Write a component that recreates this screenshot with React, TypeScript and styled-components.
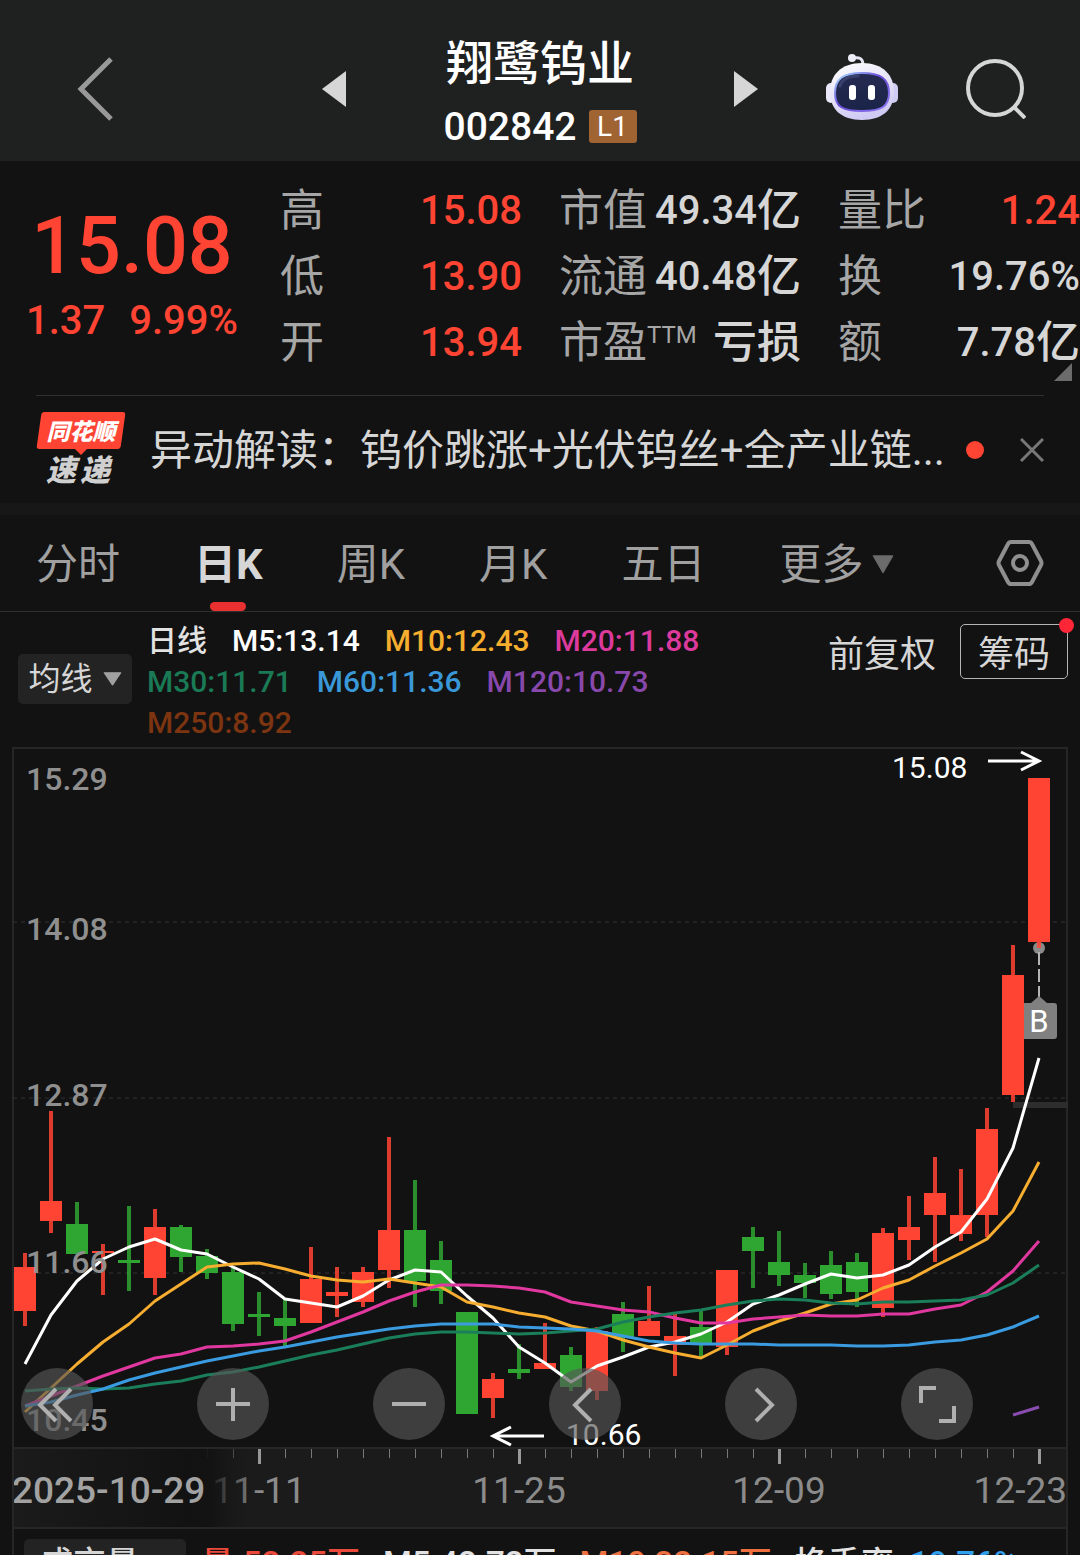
import React from "react";
import styled, { createGlobalStyle, css } from "styled-components";

const UP = "#ff4433";
const DOWN = "#2fa532";

const GlobalStyle = createGlobalStyle`
  * { box-sizing: border-box; }
  body {
    margin: 0;
    background: #121212;
    color: #d6d6d6;
    font-family: Roboto, "Noto Sans CJK SC", sans-serif;
  }
  button { font: inherit; color: inherit; background: none; border: 0; padding: 0; margin: 0; cursor: pointer; }
  svg { display: block; }
  svg text { font-family: Roboto, "Noto Sans CJK SC", sans-serif; }
`;

const Screen = styled.main`
  display: flex;
  flex-direction: column;
  height: 100vh;
  overflow: hidden;
`;

/* ---------- header ---------- */

const Header = styled.header`
  flex: none;
  display: grid;
  grid-template-columns: 1fr 436px 1fr;
  align-items: center;
  height: 161px;
  padding-top: 16px;
  background: #1f2120;
`;

const HeaderSide = styled.div<{ $end?: boolean }>`
  display: flex;
  align-items: center;
  gap: 68px;
  ${(p) =>
    p.$end
      ? css`
          justify-content: flex-end;
          padding-right: 54px;
        `
      : css`
          padding-left: 77px;
        `}
`;

const StockSwitcher = styled.div`
  display: flex;
  align-items: center;
  justify-content: space-between;
`;

const StockTitle = styled.div`
  display: flex;
  flex-direction: column;
  align-items: center;
  padding-top: 12px;
`;

const StockName = styled.h1`
  margin: 0;
  font-size: 47px;
  line-height: 64px;
  font-weight: 500;
  color: #fff;
`;

const StockCode = styled.div`
  display: flex;
  align-items: center;
  gap: 12px;
  font-size: 39px;
  line-height: 62px;
  font-weight: 500;
  color: #fff;
`;

const LevelBadge = styled.span`
  width: 48px;
  border-radius: 3px;
  background: #a06433;
  font-size: 28px;
  line-height: 33px;
  font-weight: 400;
  text-align: center;
`;

/* ---------- quote ---------- */

const Quote = styled.section`
  position: relative;
  flex: none;
  display: grid;
  grid-template-columns: 280px 1fr;
  padding: 17px 0 19px;
`;

const PriceBlock = styled.div`
  display: flex;
  flex-direction: column;
  align-items: center;
  width: 264px;
  padding-top: 21px;
  color: ${UP};
  font-weight: 500;
`;

const Price = styled.div`
  font-size: 79px;
  line-height: 94px;
`;

const Change = styled.div`
  display: flex;
  gap: 24px;
  font-size: 40px;
  line-height: 56px;
`;

const Stats = styled.dl`
  display: grid;
  grid-template-columns: repeat(3, 1fr);
  grid-auto-rows: 66px;
  column-gap: 37px;
  margin: 0;
`;

const Stat = styled.div`
  display: flex;
  align-items: center;
  justify-content: space-between;
  line-height: 66px;
  white-space: nowrap;
`;

const StatLabel = styled.dt`
  display: flex;
  font-size: 44px;
  color: #a6a6a6;
`;

const Superscript = styled.sup`
  font-size: 24px;
  line-height: 50px;
`;

const StatValue = styled.dd<{ $up?: boolean }>`
  display: flex;
  align-items: center;
  margin: 0;
  font-size: 40px;
  font-weight: 500;
  color: ${(p) => (p.$up ? UP : "#d6d6d6")};
`;

const Unit = styled.span`
  font-size: 44px;
`;

const ExpandCorner = styled.span`
  position: absolute;
  right: 8px;
  bottom: 14px;
  border-style: solid;
  border-width: 0 0 18px 18px;
  border-color: transparent transparent #6b6b6b transparent;
`;

/* ---------- news ---------- */

const News = styled.section`
  flex: none;
  display: flex;
  align-items: center;
  height: 108px;
  margin: 0 36px;
  border-top: 1px solid #303030;
`;

const NewsTag = styled.div`
  flex: none;
  display: flex;
  flex-direction: column;
  align-items: center;
  width: 90px;
  font-family: "Noto Sans CJK SC", sans-serif;
  font-weight: 900;
  font-style: italic;
`;

const NewsTagTop = styled.div`
  position: relative;
  width: 84px;
  height: 37px;
  color: #fff;
  font-size: 23px;
  line-height: 36px;
  text-align: center;
  z-index: 0;

  &::before {
    content: "";
    position: absolute;
    inset: 0;
    z-index: -1;
    border-radius: 3px;
    background: ${UP};
    transform: skewX(-8deg);
  }
  &::after {
    content: "";
    position: absolute;
    left: 50%;
    top: 37px;
    margin-left: -6px;
    border: 6px solid transparent;
    border-bottom: 0;
    border-top-color: ${UP};
  }
`;

const NewsTagBottom = styled.div`
  display: flex;
  gap: 4px;
  padding-right: 6px;
  color: #d0d0d0;
  font-size: 30px;
  line-height: 38px;
`;

const NewsText = styled.a`
  flex: 1;
  min-width: 0;
  margin-left: 24px;
  padding-top: 3px;
  overflow: hidden;
  color: #d6d6d6;
  font-size: 42px;
  line-height: 60px;
  white-space: nowrap;
  text-decoration: none;
`;

const UnreadDot = styled.span`
  flex: none;
  width: 18px;
  height: 18px;
  margin: 0 36px 0 14px;
  border-radius: 50%;
  background: ${UP};
`;

const Band = styled.div`
  flex: none;
  height: 12px;
  background: #171717;
`;

/* ---------- tabs ---------- */

const Tabs = styled.nav`
  flex: none;
  display: flex;
  align-items: stretch;
  gap: 74px;
  height: 97px;
  padding: 0 36px;
  border-bottom: 1px solid #303030;
`;

const Tab = styled.button<{ $active?: boolean }>`
  position: relative;
  display: flex;
  align-items: center;
  gap: 9px;
  padding-top: 3px;
  font-size: 42px;
  line-height: 60px;
  color: ${(p) => (p.$active ? "#d6d6d6" : "#a0a0a0")};
  font-weight: ${(p) => (p.$active ? 700 : 400)};

  ${(p) =>
    p.$active &&
    css`
      &::after {
        content: "";
        position: absolute;
        left: 50%;
        bottom: 0;
        width: 36px;
        height: 9px;
        margin-left: -18px;
        border-radius: 5px;
        background: #e93030;
      }
    `}
`;

const SettingsButton = styled.button`
  margin-left: auto;
`;

/* ---------- moving averages ---------- */

const Legend = styled.section`
  flex: none;
  display: flex;
  align-items: flex-start;
  padding: 8px 12px 4px 18px;
`;

const IndicatorButton = styled.button`
  flex: none;
  display: flex;
  align-items: center;
  justify-content: center;
  gap: 10px;
  width: 114px;
  height: 50px;
  margin-top: 34px;
  border-radius: 5px;
  background: #232323;
  font-size: 32px;
  line-height: 50px;
`;

const AverageList = styled.div`
  display: flex;
  flex-wrap: wrap;
  column-gap: 25px;
  width: 600px;
  margin-left: 15px;
  font-size: 30px;
  line-height: 41px;
  font-weight: 500;
`;

const Average = styled.span<{ $color: string }>`
  color: ${(p) => p.$color};
`;

const LegendActions = styled.div`
  display: flex;
  align-items: center;
  gap: 24px;
  margin: 4px 0 0 auto;
  font-family: "Noto Sans CJK SC", sans-serif;
  font-size: 36px;
  line-height: 53px;
`;

const ChipsButton = styled.button`
  position: relative;
  width: 108px;
  height: 55px;
  border: 1px solid #b5b5b5;
  border-radius: 5px;

  &::after {
    content: "";
    position: absolute;
    top: -7px;
    right: -7px;
    width: 15px;
    height: 15px;
    border-radius: 50%;
    background: #ff2638;
  }
`;

/* ---------- chart ---------- */

const Plot = styled.section`
  position: relative;
  flex: none;
`;

const FullSvg = styled.svg`
  width: 100%;
  height: auto;
`;

const PlotControls = styled.div`
  position: absolute;
  left: 21px;
  right: 107px;
  bottom: 9px;
  display: flex;
  justify-content: space-between;
`;

const RoundButton = styled.button`
  width: 72px;
  height: 72px;
  border-radius: 50%;
  background: rgba(86, 86, 86, 0.65);
`;

const Axis = styled.section`
  flex: none;
`;

/* ---------- volume ---------- */

const Volume = styled.section`
  flex: none;
  display: flex;
  align-items: flex-start;
  gap: 23px;
  margin: 0 12px;
  padding: 10px 0 0 10px;
  border: solid #262626;
  border-width: 2px 2px 0;
  font-size: 33px;
  line-height: 50px;
  font-weight: 500;
  white-space: nowrap;
`;

const VolumeButton = styled.button`
  display: flex;
  align-items: center;
  gap: 12px;
  height: 50px;
  margin-right: -8px;
  padding: 0 16px 0 16px;
  border-radius: 5px;
  background: #232323;
`;

const VolumeItem = styled.span<{ $color: string }>`
  display: flex;
  gap: 16px;
  color: ${(p) => p.$color};
`;

/* ---------- data ---------- */

type StatItem = { label: string; sup?: string; value: string; unit?: string; up?: boolean };

const stats: StatItem[] = [
  { label: "高", value: "15.08", up: true },
  { label: "市值", value: "49.34", unit: "亿" },
  { label: "量比", value: "1.24", up: true },
  { label: "低", value: "13.90", up: true },
  { label: "流通", value: "40.48", unit: "亿" },
  { label: "换", value: "19.76%" },
  { label: "开", value: "13.94", up: true },
  { label: "市盈", sup: "TTM", value: "", unit: "亏损" },
  { label: "额", value: "7.78", unit: "亿" },
];

const tabs = ["分时", "日K", "周K", "月K", "五日"];

const averages = [
  { text: "日线", color: "#e2e2e2" },
  { text: "M5:13.14", color: "#ffffff" },
  { text: "M10:12.43", color: "#f5ae2d" },
  { text: "M20:11.88", color: "#dd3a9d" },
  { text: "M30:11.71", color: "#1a7a56" },
  { text: "M60:11.36", color: "#3a98d8" },
  { text: "M120:10.73", color: "#8848ac" },
  { text: "M250:8.92", color: "#7d3410" },
];

// [direction, body top, body bottom, high, low]
const candles: [number, number, number, number, number][] = [
  [1, 1267, 1311, 1253, 1326],
  [1, 1201, 1221, 1111, 1233],
  [0, 1224, 1254, 1202, 1254],
  [1, 1251, 1253, 1244, 1295],
  [0, 1260, 1263, 1206, 1291],
  [1, 1227, 1278, 1209, 1295],
  [0, 1227, 1257, 1225, 1272],
  [0, 1256, 1273, 1249, 1279],
  [0, 1272, 1324, 1268, 1331],
  [0, 1314, 1317, 1292, 1336],
  [0, 1318, 1326, 1298, 1347],
  [1, 1279, 1323, 1247, 1323],
  [1, 1292, 1296, 1267, 1317],
  [1, 1272, 1302, 1267, 1307],
  [1, 1230, 1270, 1137, 1288],
  [0, 1230, 1281, 1180, 1307],
  [0, 1260, 1291, 1241, 1304],
  [0, 1312, 1414, 1312, 1414],
  [1, 1379, 1398, 1373, 1418],
  [0, 1369, 1373, 1344, 1379],
  [1, 1363, 1369, 1323, 1369],
  [0, 1355, 1387, 1347, 1391],
  [1, 1331, 1391, 1327, 1400],
  [0, 1314, 1338, 1302, 1352],
  [1, 1321, 1336, 1286, 1336],
  [1, 1336, 1345, 1314, 1376],
  [0, 1327, 1345, 1311, 1357],
  [1, 1270, 1347, 1270, 1355],
  [0, 1237, 1251, 1227, 1288],
  [0, 1262, 1275, 1231, 1286],
  [0, 1275, 1283, 1263, 1298],
  [0, 1265, 1294, 1251, 1299],
  [0, 1262, 1292, 1253, 1307],
  [1, 1233, 1308, 1228, 1317],
  [1, 1227, 1240, 1196, 1260],
  [1, 1193, 1215, 1157, 1262],
  [1, 1215, 1234, 1169, 1241],
  [1, 1129, 1215, 1108, 1237],
  [1, 975, 1095, 945, 1102],
  [1, 778, 942, 778, 948],
];

const lines = [
  {
    color: "#ffffff",
    from: 0,
    ys: [1364, 1315, 1281, 1259, 1247, 1239, 1250, 1254, 1267, 1279, 1299, 1303, 1307, 1296, 1280, 1270, 1272, 1296, 1318, 1347, 1363, 1382, 1366, 1357, 1347, 1342, 1334, 1322, 1304, 1295, 1284, 1274, 1278, 1275, 1265, 1247, 1232, 1199, 1148, 1058],
  },
  {
    color: "#f7ae30",
    from: 0,
    ys: [1412, 1388, 1364, 1342, 1324, 1301, 1284, 1267, 1264, 1263, 1269, 1276, 1280, 1282, 1279, 1283, 1287, 1302, 1307, 1313, 1317, 1326, 1331, 1340, 1347, 1353, 1358, 1345, 1331, 1321, 1313, 1304, 1300, 1288, 1280, 1266, 1253, 1239, 1211, 1162],
  },
  {
    color: "#e0389f",
    from: 0,
    ys: [1406, 1396, 1386, 1376, 1367, 1358, 1354, 1347, 1346, 1344, 1341, 1332, 1322, 1312, 1301, 1292, 1285, 1285, 1286, 1288, 1292, 1302, 1306, 1310, 1312, 1318, 1323, 1323, 1319, 1317, 1315, 1316, 1316, 1314, 1314, 1309, 1305, 1292, 1271, 1241],
  },
  {
    color: "#1b7e5a",
    from: 0,
    ys: [1391, 1389, 1388, 1389, 1388, 1384, 1381, 1375, 1372, 1367, 1361, 1355, 1350, 1344, 1338, 1334, 1332, 1332, 1333, 1334, 1333, 1331, 1329, 1322, 1317, 1313, 1310, 1305, 1301, 1299, 1300, 1303, 1304, 1302, 1302, 1301, 1300, 1295, 1283, 1265],
  },
  {
    color: "#3a9be0",
    from: 0,
    ys: [1406, 1402, 1395, 1389, 1380, 1373, 1367, 1361, 1356, 1351, 1347, 1342, 1337, 1333, 1329, 1326, 1324, 1324, 1324, 1327, 1328, 1329, 1331, 1336, 1341, 1343, 1344, 1344, 1344, 1345, 1345, 1345, 1346, 1346, 1345, 1342, 1340, 1335, 1327, 1316],
  },
  { color: "#8a4cb0", from: 38, ys: [1415, 1407] },
];

const priceLabels = [
  { text: "15.29", y: 790 },
  { text: "14.08", y: 940 },
  { text: "12.87", y: 1106 },
  { text: "11.66", y: 1273 },
  { text: "10.45", y: 1431 },
];

const candleX = (i: number) => 25 + 26 * i;

const controls: { label: string; path: string }[] = [
  { label: "跳到最早", path: "M35 21 19 37l16 16M50 21 34 37l16 16" },
  { label: "放大", path: "M36 20v33M19 36h34" },
  { label: "缩小", path: "M19 36h34" },
  { label: "向左", path: "M42 21 26 37l16 16" },
  { label: "向右", path: "M31 21l16 16-16 16" },
  { label: "全屏", path: "M35 20H20v15M53 38v15H38" },
];

/* ---------- drawings ---------- */

const Caret = ({ w, h, color }: { w: number; h: number; color: string }) => (
  <svg width={w} height={h} viewBox="0 0 22 19" preserveAspectRatio="none" aria-hidden="true">
    <path d="M1.500 1h19L11 17.500z" fill={color} stroke={color} strokeWidth="1.500" strokeLinejoin="round" />
  </svg>
);

const Robot = () => (
  <svg width="72" height="70" viewBox="0 2 72 70" aria-hidden="true">
    <defs>
      <linearGradient id="shell" x1="0" y1="0" x2="0.400" y2="1">
        <stop offset="0" stopColor="#ffffff" />
        <stop offset="0.600" stopColor="#e4e0f6" />
        <stop offset="1" stopColor="#cfcaf4" />
      </linearGradient>
      <linearGradient id="visorEdge" x1="0" y1="0" x2="1" y2="1">
        <stop offset="0" stopColor="#a8e4ff" />
        <stop offset="0.450" stopColor="#6a4ad8" />
        <stop offset="1" stopColor="#8f7cf0" />
      </linearGradient>
      <linearGradient id="visor" x1="0" y1="0" x2="0" y2="1">
        <stop offset="0" stopColor="#262a52" />
        <stop offset="1" stopColor="#1a2448" />
      </linearGradient>
    </defs>
    <path d="M27 6c6-1 10 0 10 7" fill="none" stroke="#e6e4f2" strokeWidth="3" />
    <circle cx="26" cy="6" r="4" fill="#eeedf8" />
    <rect x="0" y="31" width="10" height="20" rx="5" fill="#e9e7f8" />
    <rect x="62" y="31" width="10" height="20" rx="5" fill="#cfcdf2" />
    <path d="M36 11c21 0 32 12 32 29S57 68 36 68 4 57 4 40s11-29 32-29z" fill="url(#shell)" />
    <path d="M36 21c19 0 27 6 27 20s-8 18-27 18-27-4-27-18 8-20 27-20z" fill="url(#visor)" stroke="url(#visorEdge)" strokeWidth="2" />
    <path d="M14 34c2-7 8-10 18-10" fill="none" stroke="#4a5080" strokeWidth="3" strokeLinecap="round" opacity="0.600" />
    <rect x="23" y="33" width="7" height="15" rx="3" fill="#fff" />
    <rect x="42" y="33" width="7" height="15" rx="3" fill="#fff" />
  </svg>
);

const CandleChart = () => (
  <FullSvg viewBox="0 747 1080 702" role="img" aria-label="日K线图">
    <rect x="13" y="748" width="1054" height="700" fill="none" stroke="#262626" strokeWidth="2" />
    {[922, 1098, 1273].map((y) => (
      <line key={y} x1="13" x2="1067" y1={y} y2={y} stroke="#333" strokeWidth="1" strokeDasharray="4 4" />
    ))}
    <rect x="1013" y="1102" width="55" height="6" fill="#2d2d2d" />
    <circle cx="1039" cy="948" r="6" fill="#8a8a8a" />
    <path d="M1039 952v46" stroke="#b5b5b5" strokeWidth="2" strokeDasharray="13 4" />
    <path d="M1031 1003l8-7 8 7h7a3 3 0 0 1 3 3v30a3 3 0 0 1-3 3h-30a3 3 0 0 1-3-3v-30a3 3 0 0 1 3-3z" fill="#808080" />
    <text x="1039" y="1032" fontSize="31" fill="#fff" textAnchor="middle">
      B
    </text>
    {candles.map(([up, top, bottom, high, low], i) => (
      <g key={i} fill={up ? UP : DOWN}>
        <rect x={candleX(i) - 2} y={high} width="4" height={low - high} opacity="0.850" />
        <rect x={candleX(i) - 11} y={top} width="22" height={bottom - top} />
      </g>
    ))}
    {lines.map((line) => (
      <polyline
        key={line.color}
        points={line.ys.map((y, i) => `${candleX(line.from + i)},${y}`).join(" ")}
        fill="none"
        stroke={line.color}
        strokeWidth="3"
        strokeLinejoin="round"
      />
    ))}
    {priceLabels.map((p) => (
      <text key={p.text} x="26" y={p.y} fontSize="32" fontWeight="500" fill="#8f8f8f">
        {p.text}
      </text>
    ))}
    <g fill="none" stroke="#fff" strokeWidth="3">
      <path d="M988 761h50M1021 752l18 9-18 9" />
      <path d="M544 1436h-50M511 1427l-18 9 18 9" />
    </g>
    <text x="892" y="778" fontSize="30" fill="#fff">
      15.08
    </text>
    <text x="566" y="1445" fontSize="30" fill="#fff">
      10.66
    </text>
  </FullSvg>
);

const DateAxis = () => (
  <FullSvg viewBox="0 0 1080 78" role="img" aria-label="日期轴">
    <defs>
      <linearGradient id="axisFade" x1="0" x2="1" y1="0" y2="0">
        <stop offset="0" stopColor="#1b1b1b" />
        <stop offset="0.720" stopColor="#121212" />
        <stop offset="0.800" stopColor="#121212" stopOpacity="0.900" />
        <stop offset="1" stopColor="#1b1b1b" stopOpacity="0" />
      </linearGradient>
    </defs>
    <rect x="12" y="0" width="1056" height="78" fill="#1b1b1b" />
    {candles.map((_, i) => {
      const major = i % 10 === 9;
      return (
        <rect
          key={i}
          x={candleX(i) - (major ? 1 : 0)}
          y="0"
          width={major ? 3 : 1}
          height={major ? 15 : 9}
          fill={major ? "#999" : "#777"}
        />
      );
    })}
    <g fontSize="37" fill="#8b8b8b">
      <text x="259" y="54" textAnchor="middle">11-11</text>
      <text x="519" y="54" textAnchor="middle">11-25</text>
      <text x="779" y="54" textAnchor="middle">12-09</text>
      <text x="1067" y="54" textAnchor="end">12-23</text>
    </g>
    <rect x="12" y="0" width="248" height="78" fill="url(#axisFade)" />
    <text x="12" y="54" fontSize="37" fontWeight="500" fill="#a2a2a2">
      2025-10-29
    </text>
    <path d="M13 0v78M1067 0v78" stroke="#262626" strokeWidth="2" />
  </FullSvg>
);

export default function App() {
  return (
    <Screen>
      <GlobalStyle />
      <Header>
        <HeaderSide>
          <button aria-label="返回">
            <svg width="36" height="64" viewBox="0 0 36 64">
              <path d="M34 2 4 32l30 30" fill="none" stroke="#999" strokeWidth="5" />
            </svg>
          </button>
        </HeaderSide>
        <StockSwitcher>
          <button aria-label="上一只">
            <svg width="24" height="36" viewBox="0 0 24 36">
              <path d="M24 0v36L0 18z" fill="#d6d6d6" />
            </svg>
          </button>
          <StockTitle>
            <StockName>翔鹭钨业</StockName>
            <StockCode>
              002842<LevelBadge>L1</LevelBadge>
            </StockCode>
          </StockTitle>
          <button aria-label="下一只">
            <svg width="24" height="36" viewBox="0 0 24 36">
              <path d="M0 0v36l24-18z" fill="#d6d6d6" />
            </svg>
          </button>
        </StockSwitcher>
        <HeaderSide $end>
          <button aria-label="智能助手">
            <Robot />
          </button>
          <button aria-label="搜索">
            <svg width="60" height="60" viewBox="0 0 60 60">
              <circle cx="29" cy="29" r="27" fill="none" stroke="#d6d6d6" strokeWidth="4" />
              <path d="M48 48l11 11" stroke="#d6d6d6" strokeWidth="4" />
            </svg>
          </button>
        </HeaderSide>
      </Header>

      <Quote>
        <PriceBlock>
          <Price>15.08</Price>
          <Change>
            <span>1.37</span>
            <span>9.99%</span>
          </Change>
        </PriceBlock>
        <Stats>
          {stats.map((s) => (
            <Stat key={s.label}>
              <StatLabel>
                {s.label}
                {s.sup && <Superscript>{s.sup}</Superscript>}
              </StatLabel>
              <StatValue $up={s.up}>
                {s.value}
                {s.unit && <Unit>{s.unit}</Unit>}
              </StatValue>
            </Stat>
          ))}
        </Stats>
        <ExpandCorner />
      </Quote>

      <News>
        <NewsTag>
          <NewsTagTop>同花顺</NewsTagTop>
          <NewsTagBottom>
            <span>速</span>
            <span>递</span>
          </NewsTagBottom>
        </NewsTag>
        <NewsText href="#news">异动解读：钨价跳涨+光伏钨丝+全产业链...</NewsText>
        <UnreadDot />
        <button aria-label="关闭">
          <svg width="24" height="24" viewBox="0 0 24 24">
            <path d="M1 1l22 22M23 1 1 23" stroke="#777" strokeWidth="3" />
          </svg>
        </button>
      </News>
      <Band />

      <Tabs>
        {tabs.map((t) => (
          <Tab key={t} $active={t === "日K"}>
            {t}
          </Tab>
        ))}
        <Tab>
          更多
          <Caret w={22} h={19} color="#6b6b6b" />
        </Tab>
        <SettingsButton aria-label="图表设置">
          <svg width="48" height="46" viewBox="0 0 48 46" fill="none" stroke="#8f8f8f" strokeWidth="4">
            <path d="M15 2h18q2 0 3 2l9 17q1 2 0 4l-9 17q-1 2-3 2H15q-2 0-3-2L3 25q-1-2 0-4l9-17q1-2 3-2z" />
            <circle cx="24" cy="23" r="7" />
          </svg>
        </SettingsButton>
      </Tabs>

      <Legend>
        <IndicatorButton>
          均线
          <Caret w={19} h={14} color="#a0a0a0" />
        </IndicatorButton>
        <AverageList>
          {averages.map((a) => (
            <Average key={a.text} $color={a.color}>
              {a.text}
            </Average>
          ))}
        </AverageList>
        <LegendActions>
          <button>前复权</button>
          <ChipsButton>筹码</ChipsButton>
        </LegendActions>
      </Legend>

      <Plot>
        <CandleChart />
        <PlotControls>
          {controls.map((c) => (
            <RoundButton key={c.label} aria-label={c.label}>
              <svg width="72" height="72" viewBox="0 0 72 72">
                <path d={c.path} fill="none" stroke="#b0b0b0" strokeWidth="4" />
              </svg>
            </RoundButton>
          ))}
        </PlotControls>
      </Plot>
      <Axis>
        <DateAxis />
      </Axis>

      <Volume>
        <VolumeButton>
          成交量
          <Caret w={19} h={14} color="#a0a0a0" />
        </VolumeButton>
        <VolumeItem $color="#ea4a3c">量:52.25万</VolumeItem>
        <VolumeItem $color="#e2e2e2">M5:42.72万</VolumeItem>
        <VolumeItem $color="#ee7040">M10:32.15万</VolumeItem>
        <VolumeItem $color="#e2e2e2">
          换手率<VolumeItem $color="#2f9fee">19.76%</VolumeItem>
        </VolumeItem>
      </Volume>
    </Screen>
  );
}
